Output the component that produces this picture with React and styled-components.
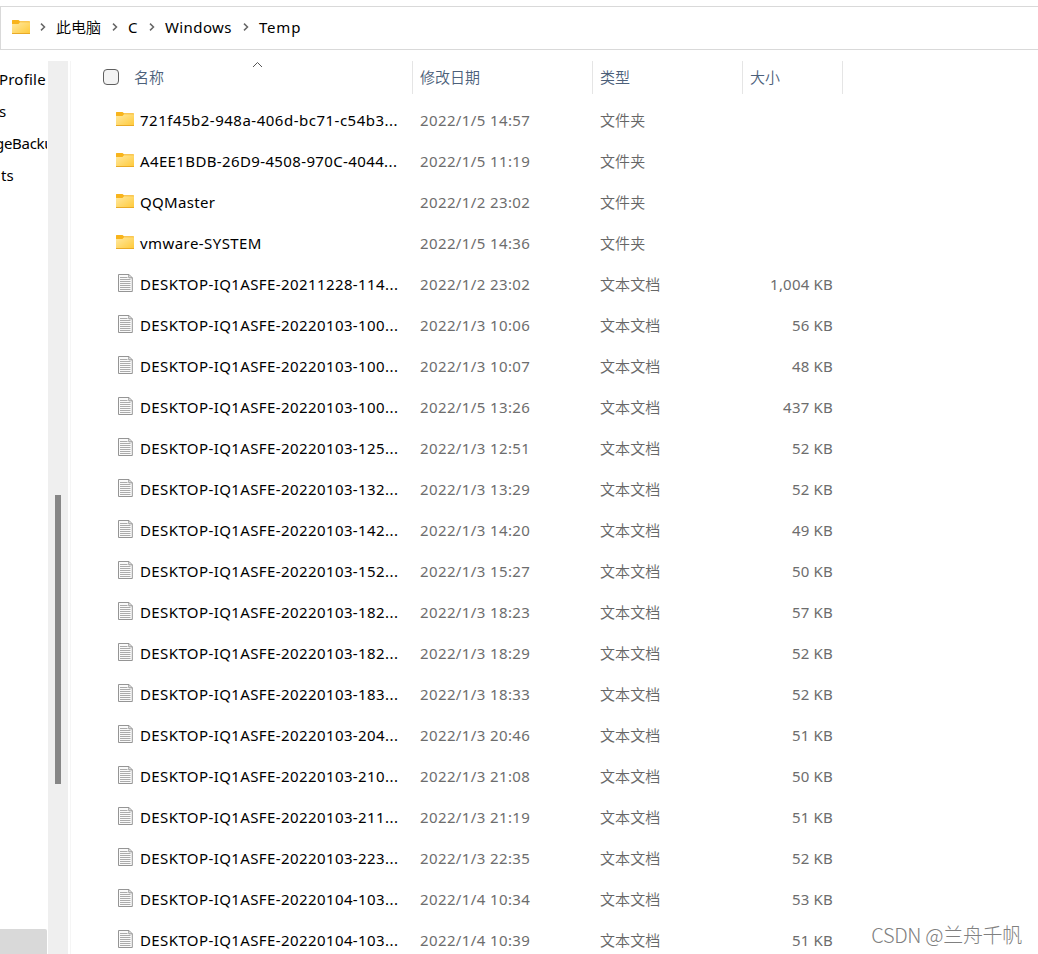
import React from "react";
import styled, { createGlobalStyle } from "styled-components";

const GlobalStyle = createGlobalStyle`
    * {
        box-sizing: border-box;
    }
    body {
        margin: 0;
        background: #fff;
        overflow: hidden;
        font-family: "Noto Sans", "Noto Sans CJK SC", sans-serif;
        font-size: 15px;
        color: #000;
    }
`
const WindowWrap = styled.div`
    position: relative;
    display: flex;
    flex-direction: column;
    width: 1038px;
    height: 954px;
    padding-top: 6px;
    overflow: hidden;
`
const AddressBar = styled.div`
    display: flex;
    align-items: center;
    flex: none;
    height: 44px;
    padding-left: 11px;
    padding-bottom: 2px;
    border: 1px solid #d9d9d9;
    border-right: none;
`
const Crumb = styled.span`
    width: ${props => props.$width}px;
    line-height: 22px;
    white-space: nowrap;
    letter-spacing: ${props => props.$spacing || 0}px;
    font-weight: ${props => props.$weight || 400};
`
const CrumbArrow = styled.svg`
    flex: none;
    width: 6px;
    height: 8px;
    margin: 0 10px;
`
const BodyWrap = styled.div`
    display: flex;
    flex: 1;
    min-height: 0;
    padding-top: 11px;
`
const SideBar = styled.div`
    display: flex;
    flex-direction: column;
    flex: none;
    width: 47px;
    padding-top: 2px;
    overflow: hidden;
`
const SideItem = styled.div`
    flex: none;
    height: 32px;
    line-height: 32px;
    margin-left: ${props => props.$shift}px;
    white-space: nowrap;
    letter-spacing: ${props => props.$spacing || 0}px;
`
const SideSelected = styled.div`
    flex: none;
    height: 25px;
    margin-top: auto;
    background: #d9d9d9;
    border-top-right-radius: 2px;
`
const ScrollTrack = styled.div`
    flex: none;
    width: 20px;
    margin-left: 1px;
    padding: 434px 7px 0;
    background: #efefef;
`
const ScrollThumb = styled.div`
    width: 6px;
    height: 289px;
    background: #868686;
`
const MainWrap = styled.div`
    flex: 1;
    margin-left: 2px;
    border-left: 1px solid #f5f5f5;
`
const HeadRow = styled.div`
    display: flex;
    height: 39px;
`
const HeadCell = styled.div`
    position: relative;
    display: flex;
    align-items: center;
    width: ${props => props.$width}px;
    height: 33px;
    padding-left: ${props => props.$pad || 7}px;
    padding-bottom: 2px;
    border-right: 1px solid #e5e5e5;
    color: #4c607a;
    font-weight: 350;
`
const CheckBox = styled.div`
    width: 16px;
    height: 16px;
    margin-right: 15px;
    border: 1px solid #5f5f5f;
    border-radius: 4px;
    background: #f3f3f3;
`
const SortArrow = styled.svg`
    position: absolute;
    left: 181px;
    top: 0;
    width: 11px;
    height: 7px;
`
const FileRow = styled.div`
    display: flex;
    align-items: center;
    height: 41px;
    padding-left: 45px;
    padding-bottom: 2px;
    line-height: 22px;
    white-space: nowrap;
`
const IconBox = styled.div`
    display: flex;
    width: 24px;
    margin-top: -1px;
`
const NameText = styled.div`
    width: 280px;
    letter-spacing: ${props => props.$spacing}px;
`
const DateText = styled.div`
    width: 180px;
    color: #6d6d6d;
    letter-spacing: 0.38px;
`
const TypeText = styled.div`
    width: 142px;
    color: #666;
    font-weight: 350;
    letter-spacing: 0.1px;
`
const SizeText = styled.div`
    width: 91px;
    color: #6d6d6d;
    text-align: right;
    letter-spacing: 0.2px;
`
const WaterMark = styled.div`
    position: absolute;
    right: 16px;
    bottom: 4px;
    color: #808080;
    font-family: "Noto Sans CJK SC", sans-serif;
    font-size: 20px;
    font-weight: 300;
    line-height: 30px;
    white-space: nowrap;
    letter-spacing: -0.3px;
`

function FolderIcon() {
    return (
        <svg width="18" height="14" viewBox="0 0 18 14">
            <defs>
                <linearGradient id="folderFront" x1="0" y1="0" x2="1" y2="1">
                    <stop offset="0" stopColor="#ffe9a2"/>
                    <stop offset="1" stopColor="#ffc937"/>
                </linearGradient>
            </defs>
            <path d="M0 0.5Q0 0 .5 0H6.5L8 1.3H17.5Q18 1.3 18 2V5H0Z" fill="#f8b41c"/>
            <path d="M0 4H6.5L8 2.3H18V13.5Q18 14 17.5 14H.5Q0 14 0 13.5Z" fill="url(#folderFront)"/>
            <path d="M0 13.5H18" stroke="#e9aa27"/>
        </svg>
    )
}

const PageSvg = styled.svg`
    width: 15px;
    height: 18px;
    margin-left: 2px;
`
function TextIcon() {
    return (
        <PageSvg viewBox="0 0 15 18">
            <path d="M.5 .5H11L14.3 3.8V17.5H.5Z" fill="#fafafa" stroke="#959595"/>
            <path d="M10.8 .5V3.8H14.3" fill="none" stroke="#959595"/>
            <path d="M2 3.5H9.5M2 5.5H12.5M2 7.5H12.5M2 9.5H12.5M2 11.5H12.5M2 13.5H12.5M2 15.5H12.5" stroke="#ababab"/>
        </PageSvg>
    )
}

function Arrow() {
    return (
        <CrumbArrow viewBox="0 0 6 8">
            <path d="M1 .6L4.5 4L1 7.4" fill="none" stroke="#666" strokeWidth="1.5"/>
        </CrumbArrow>
    )
}

const folderList = [
    {name: '721f45b2-948a-406d-bc71-c54b3...', date: '2022/1/5 14:57', spacing: 0.5},
    {name: 'A4EE1BDB-26D9-4508-970C-4044...', date: '2022/1/5 11:19', spacing: 0.37},
    {name: 'QQMaster', date: '2022/1/2 23:02', spacing: 0.33},
    {name: 'vmware-SYSTEM', date: '2022/1/5 14:36', spacing: 0.43}
]
const fileList = [
    {name: '20211228-114', date: '2022/1/2 23:02', size: '1,004 KB'},
    {name: '20220103-100', date: '2022/1/3 10:06', size: '56 KB'},
    {name: '20220103-100', date: '2022/1/3 10:07', size: '48 KB'},
    {name: '20220103-100', date: '2022/1/5 13:26', size: '437 KB'},
    {name: '20220103-125', date: '2022/1/3 12:51', size: '52 KB'},
    {name: '20220103-132', date: '2022/1/3 13:29', size: '52 KB'},
    {name: '20220103-142', date: '2022/1/3 14:20', size: '49 KB'},
    {name: '20220103-152', date: '2022/1/3 15:27', size: '50 KB'},
    {name: '20220103-182', date: '2022/1/3 18:23', size: '57 KB'},
    {name: '20220103-182', date: '2022/1/3 18:29', size: '52 KB'},
    {name: '20220103-183', date: '2022/1/3 18:33', size: '52 KB'},
    {name: '20220103-204', date: '2022/1/3 20:46', size: '51 KB'},
    {name: '20220103-210', date: '2022/1/3 21:08', size: '50 KB'},
    {name: '20220103-211', date: '2022/1/3 21:19', size: '51 KB'},
    {name: '20220103-223', date: '2022/1/3 22:35', size: '52 KB'},
    {name: '20220104-103', date: '2022/1/4 10:34', size: '53 KB'},
    {name: '20220104-103', date: '2022/1/4 10:39', size: '51 KB'}
]

export default function App() {
    return (
        <WindowWrap>
            <GlobalStyle/>
            <AddressBar>
                <FolderIcon/>
                <Arrow/>
                <Crumb $width={46} $weight={350}>此电脑</Crumb>
                <Arrow/>
                <Crumb $width={11}>C</Crumb>
                <Arrow/>
                <Crumb $width={68} $spacing={0.4}>Windows</Crumb>
                <Arrow/>
                <Crumb $width={44} $spacing={0.8}>Temp</Crumb>
            </AddressBar>
            <BodyWrap>
                <SideBar>
                    <SideItem $shift={-1} $spacing={0.2}>Profile</SideItem>
                    <SideItem $shift={-1}>s</SideItem>
                    <SideItem $shift={-5} $spacing={-0.3}>geBacku</SideItem>
                    <SideItem $shift={1} $spacing={0.2}>ts</SideItem>
                    <SideSelected/>
                </SideBar>
                <ScrollTrack>
                    <ScrollThumb/>
                </ScrollTrack>
                <MainWrap>
                    <HeadRow>
                        <HeadCell $width={342} $pad={32}>
                            <CheckBox/>
                            名称
                            <SortArrow viewBox="0 0 11 7">
                                <path d="M1 6L5.5 1.5L10 6" fill="none" stroke="#555"/>
                            </SortArrow>
                        </HeadCell>
                        <HeadCell $width={180}>修改日期</HeadCell>
                        <HeadCell $width={150}>类型</HeadCell>
                        <HeadCell $width={100}>大小</HeadCell>
                    </HeadRow>
                    {
                        folderList.map(item => (
                            <FileRow key={item.name}>
                                <IconBox><FolderIcon/></IconBox>
                                <NameText $spacing={item.spacing}>{item.name}</NameText>
                                <DateText>{item.date}</DateText>
                                <TypeText>文件夹</TypeText>
                            </FileRow>
                        ))
                    }
                    {
                        fileList.map(item => (
                            <FileRow key={item.date + item.size}>
                                <IconBox><TextIcon/></IconBox>
                                <NameText $spacing={0.4}>{`DESKTOP-IQ1ASFE-${item.name}...`}</NameText>
                                <DateText>{item.date}</DateText>
                                <TypeText>文本文档</TypeText>
                                <SizeText>{item.size}</SizeText>
                            </FileRow>
                        ))
                    }
                </MainWrap>
            </BodyWrap>
            <WaterMark>CSDN @兰舟千帆</WaterMark>
        </WindowWrap>
    )
}
